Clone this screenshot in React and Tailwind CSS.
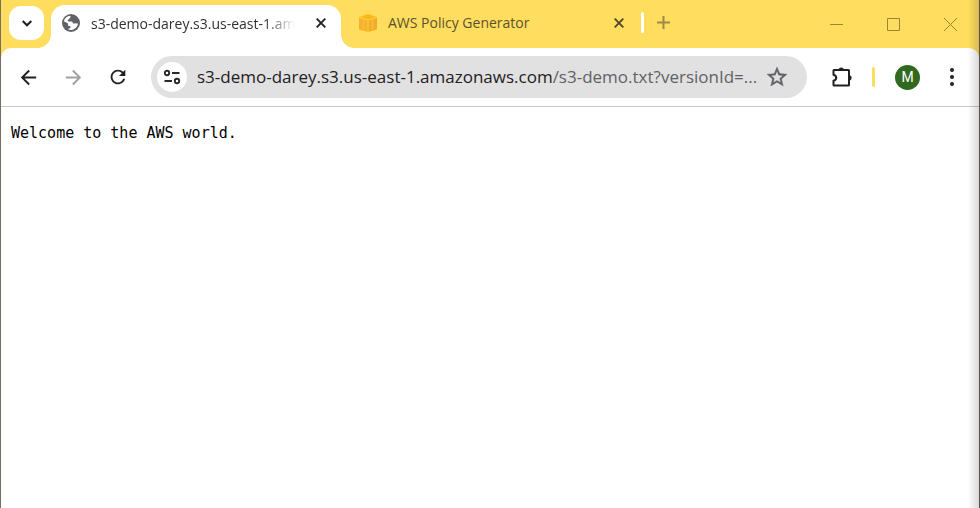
import React from "react";
import { MdArrowBack, MdArrowForward, MdRefresh, MdStarOutline } from "react-icons/md";

const uiFont = "font-['Segoe_UI','Open_Sans','Noto_Sans',sans-serif]";

function GlobeIcon() {
  return (
    <svg viewBox="0 0 20 20" className="size-5 shrink-0" aria-hidden="true">
      <circle cx="10" cy="10" r="9" fill="#5f6368" />
      <path
        d="M2.9 8.4C3.6 5 6 3.1 9.3 2.8c.6 1 .2 1.9-.7 2.4-.8.4-.6 1.3-1.5 1.7-.9.3-.3 1.6.8 1.5h3.2c.7.5.4 1.6 1.1 2.1.9.3 1.4-.3 2.2-.3.9 0 1.7.5 2.6.4-.5 3.5-3 6-6.4 6.4-1.300.1-2.600-.300-3.600-.900.500-.9 1.600-.5 2.300-1.200.800-.7.200-1.900-.8-1.900-1 0-1.500-.7-1.500-1.600 0-1.300-.700-1.700-1.700-1.900-.900-.100-1.600-.600-2.400-1.200z"
        fill="#fff"
      />
    </svg>
  );
}

function BoxIcon() {
  return (
    <svg viewBox="0 0 20 20" className="size-5 shrink-0" aria-hidden="true">
      <path d="M1 4 10 1l9 3-9 3z" fill="#fdb813" />
      <path d="M1 4.500 10 7v12l-9-2.500z" fill="#f6b22b" />
      <path d="M19 4.500 10 7v12l9-2.500z" fill="#f4ad27" />
      <path d="M5.500 6v11.500M14.500 6v11.500" stroke="#f9bd3c" strokeWidth="1.500" />
      <path d="M1 4.300 10 7l9-2.700M10 7v12" fill="none" stroke="#fdcb50" strokeWidth="1" />
    </svg>
  );
}

function CloseIcon() {
  return (
    <svg viewBox="0 0 10 10" className="size-[10px]" aria-hidden="true">
      <path d="M.7.700 9.300 9.300M9.300.700.7 9.300" stroke="currentColor" strokeWidth="1.900" />
    </svg>
  );
}

function TuneIcon() {
  return (
    <svg viewBox="0 0 18 16" className="h-4 w-[18px]" fill="none" stroke="#28292c" strokeWidth="1.900" aria-hidden="true">
      <circle cx="4" cy="4" r="2.200" />
      <path d="M9 4h7.500M1.500 12H9" />
      <circle cx="14" cy="12" r="2.200" />
    </svg>
  );
}

function PuzzleIcon() {
  return (
    <svg viewBox="0 0 22 22" className="size-[22px]" aria-hidden="true">
      <path
        d="M3 4h14.500q.5 0 .5.500v14.500q0 .5-.5.500H3q-.5 0-.5-.500v-4.300q2.700-.6 2.700-3t-2.700-3V4.500q0-.5.500-.500z"
        fill="none" stroke="#1f2023" strokeWidth="2" strokeLinejoin="round"
      />
      <path d="M7.600 4a2.600 2.600 0 0 1 5.200 0zM18 9.200a2.600 2.600 0 0 1 0 5.200z" fill="#1f2023" />
    </svg>
  );
}

/* Curve that joins the foot of a tab to the toolbar. */
function Flare({ left }) {
  return (
    <svg
      viewBox="0 0 14 14"
      className={left ? "absolute bottom-0 right-full size-[14px]" : "absolute bottom-0 left-full size-[14px] -scale-x-100"}
      aria-hidden="true"
    >
      <path d="M14 0v14H0C8 14 14 8 14 0z" fill="#fff" />
    </svg>
  );
}

function TabStrip() {
  return (
    <header className="flex h-12 bg-[#ffdd5e] pl-2">
      <button aria-label="Search tabs" className="mt-[6px] flex h-[34px] w-[35px] shrink-0 items-center justify-center rounded-xl bg-white">
        <svg viewBox="0 0 10 7" className="h-[7px] w-[10px]" fill="none" stroke="#1f2023" strokeWidth="2" aria-hidden="true">
          <path d="M.7 1 5 5.300 9.300 1" />
        </svg>
      </button>
      <nav aria-label="Tabs" className="flex min-w-0">
        <div className="relative ml-[7px] mt-[5px] flex w-[290px] items-center rounded-t-[14px] bg-white pb-[7px] pl-[10px] pr-[15px]">
          <Flare left />
          <GlobeIcon />
          <a href="#page" className="ml-[10px] whitespace-nowrap text-[15px] leading-5 text-[#303134] [mask-image:linear-gradient(to_right,black_85%,transparent)]">
            <span className="text-[14px]">s3-demo-darey.s3.us-east-1.am</span>
          </a>
          <button aria-label="Close tab" className="ml-auto text-[#202124]"><CloseIcon /></button>
          <Flare />
        </div>
        <div className="ml-[17px] mt-[5px] flex w-[266px] items-center pb-[7px]">
          <BoxIcon />
          <a href="#policy" className="ml-[10px] whitespace-nowrap text-[14px] leading-5 text-[#5c5130]">AWS Policy Generator</a>
          <button aria-label="Close AWS Policy Generator" className="ml-auto text-[#51482a]"><CloseIcon /></button>
        </div>
      </nav>
      <span className="ml-[17px] mt-[12px] h-[21px] w-[3px] shrink-0 rounded-full bg-white" />
      <button aria-label="New tab" className="ml-[13px] mt-[16px] size-[13px]">
        <svg viewBox="0 0 13 13" className="size-[13px]" stroke="#9d8848" strokeWidth="2" aria-hidden="true"><path d="M6.500 0v13M0 6.500h13" /></svg>
      </button>
      <div className="ml-auto flex h-12 items-center gap-[44px] pr-[22px] text-[#9a8435]">
        <button aria-label="Minimize"><svg viewBox="0 0 13 13" className="size-[13px]" stroke="currentColor" aria-hidden="true"><path d="M0 6.500h13" /></svg></button>
        <button aria-label="Maximize"><svg viewBox="0 0 13 13" className="size-[13px]" fill="none" stroke="currentColor" aria-hidden="true"><path d="M.5.500h12v12H.5z" /></svg></button>
        <button aria-label="Close window"><svg viewBox="0 0 13 13" className="size-[13px]" stroke="currentColor" aria-hidden="true"><path d="m0 0 13 13M13 0 0 13" /></svg></button>
      </div>
    </header>
  );
}

function Toolbar() {
  return (
    <div className="bg-[#ffdd5e]">
      <div className="flex h-[59px] items-center rounded-t-[10px] border-b border-[#c8c8c8] bg-white pl-4 pr-[25px]">
        <button aria-label="Back" className="text-[#1f2023]"><MdArrowBack size={23} /></button>
        <button aria-label="Forward" className="ml-[22px] text-[#a0a0a0]"><MdArrowForward size={23} /></button>
        <button aria-label="Reload" className="ml-[22px] text-[#1f2023]"><MdRefresh size={22} /></button>
        <div className="ml-[22px] flex h-[42px] min-w-0 flex-1 items-center rounded-full bg-[#e1e1e1] pl-[6px] pr-[18px]">
          <button aria-label="View site information" className="flex size-[30px] shrink-0 items-center justify-center rounded-full bg-white"><TuneIcon /></button>
          <div className="ml-[10px] whitespace-nowrap text-[17px] leading-6 text-[#606165]">
            <span className="text-[#1f2023]">s3-demo-darey.s3.us-east-1.amazonaws.com</span>/s3-demo.txt?versionId=...
          </div>
          <button aria-label="Bookmark this tab" className="ml-auto shrink-0 text-[#606165]"><MdStarOutline size={24} stroke="currentColor" strokeWidth={0.4} /></button>
        </div>
        <button aria-label="Extensions" className="ml-[24px]"><PuzzleIcon /></button>
        <span className="ml-[19px] h-5 w-[3px] rounded-full bg-[#ffdd5e]" />
        <button aria-label="Profile" className="ml-[20px] size-[25px] rounded-full bg-[#31691e] text-center font-['Roboto',sans-serif] text-[14px] leading-[25px] text-white">M</button>
        <button aria-label="Menu" className="ml-[30px]">
          <svg viewBox="0 0 4 18" className="h-[18px] w-[4px]" fill="#1f2023" aria-hidden="true">
            <circle cx="2" cy="2" r="2" /><circle cx="2" cy="9" r="2" /><circle cx="2" cy="16" r="2" />
          </svg>
        </button>
      </div>
    </div>
  );
}

export default function App() {
  return (
    <div className={`relative flex min-h-screen flex-col border-l border-r border-l-[#786c65] border-r-[#57524e] bg-white ${uiFont}`}>
      <TabStrip />
      <Toolbar />
      <main className="flex-1 px-[10px] pt-4">
        <pre className="font-['DejaVu_Sans_Mono',monospace] text-[15px] leading-5 text-black">Welcome to the AWS world.</pre>
      </main>
      <div className="pointer-events-none absolute inset-y-0 right-0 w-[11px] bg-linear-to-r from-transparent to-black/15" />
    </div>
  );
}
